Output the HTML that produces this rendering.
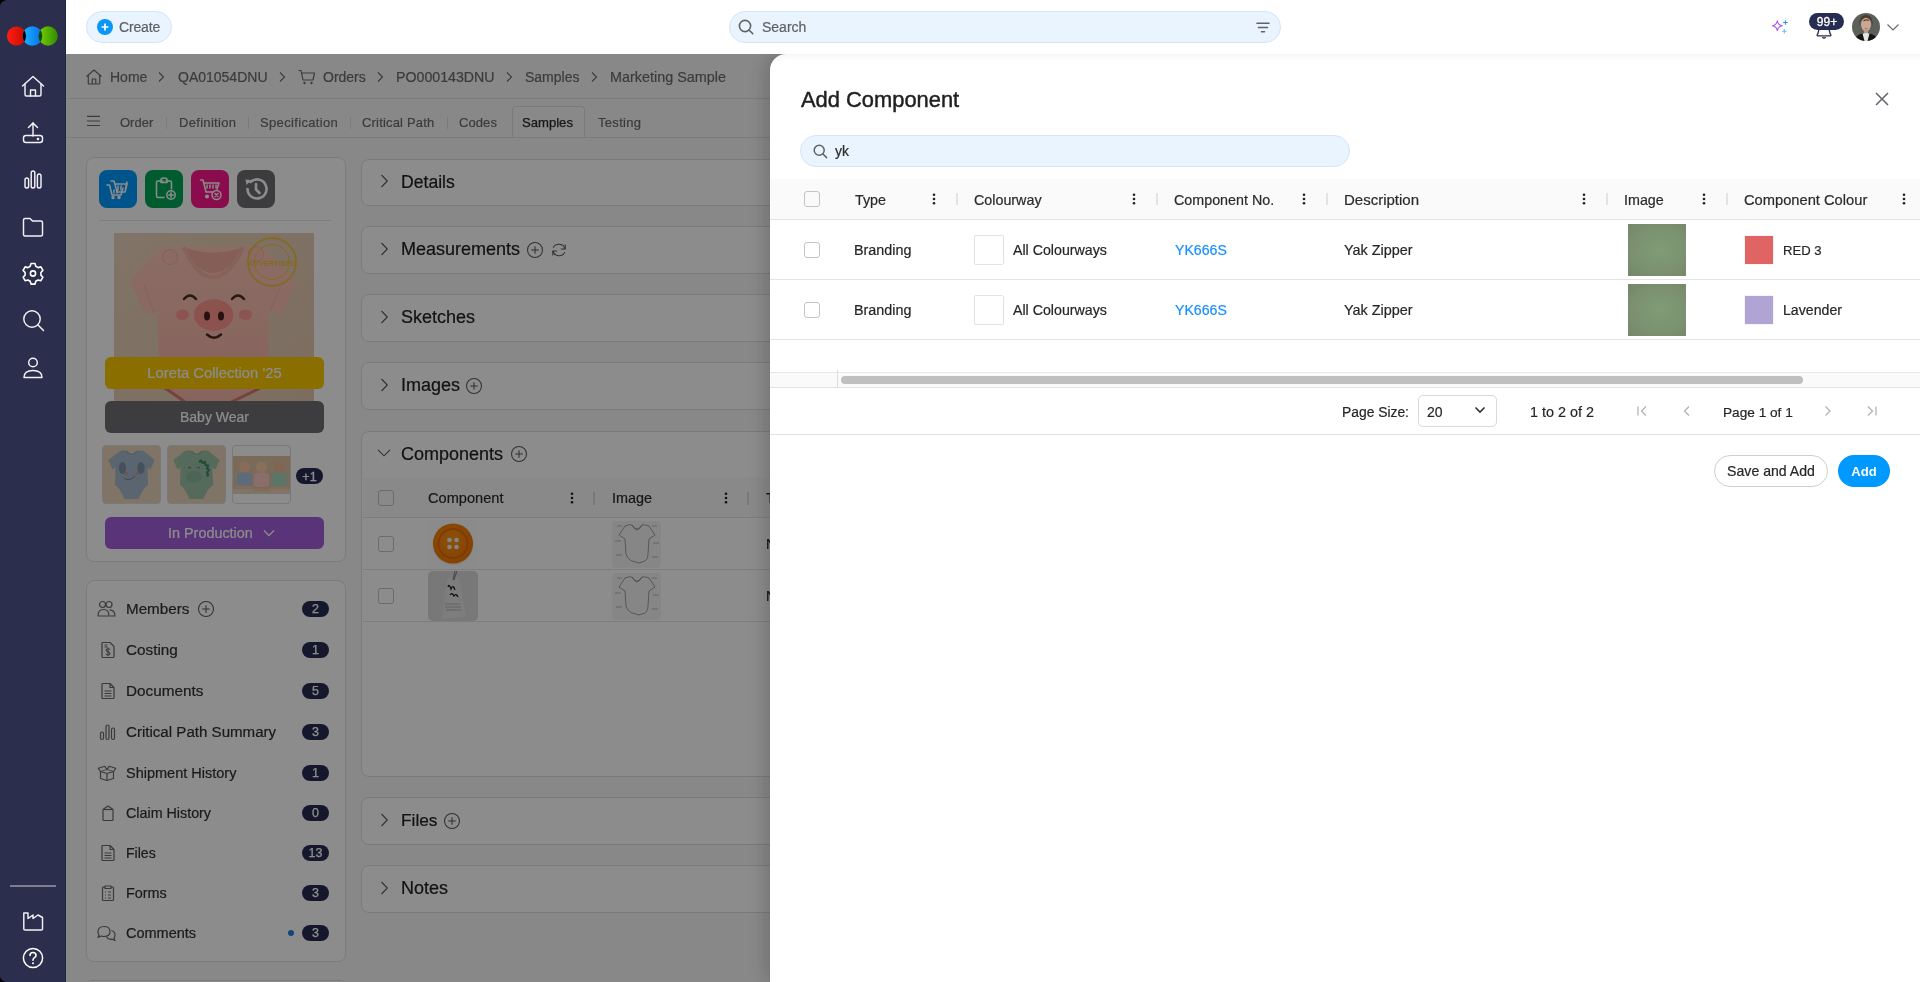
<!DOCTYPE html><html><head><meta charset="utf-8"><style>
html,body{margin:0;padding:0;width:1920px;height:982px;overflow:hidden;background:#fff}
body{position:relative;font-family:"Liberation Sans",sans-serif}
.t{position:absolute;white-space:nowrap;line-height:1;will-change:transform;-webkit-text-stroke:0.2px currentColor}
.r{position:absolute;display:block}
</style></head><body>
<div class="r" style="left:66px;top:54px;width:1854px;height:928px;background:#f8f8f8"></div><svg class="r" style="left:84px;top:68px;" width="20" height="18" viewBox="0 0 20 18"><path d="M2.5 8.5 L10 2 L17.5 8.5 M4.3 7 V15.3 Q4.3 16 5 16 H15 Q15.7 16 15.7 15.3 V7 M8.2 16 V11 H11.8 V16" fill="none" stroke="#6c6c6c" stroke-width="1.2" stroke-linejoin="round"/></svg><div class="t" style="left:110.4px;top:70px;font-size:14px;color:#6c6c6c;font-weight:400;">Home</div><svg class="r" style="left:157px;top:71px;" width="8" height="12" viewBox="0 0 8 12"><path d="M2 1.5 L6.5 6 L2 10.5" fill="none" stroke="#6b6b6b" stroke-width="1.1"/></svg><div class="t" style="left:178px;top:70px;font-size:14px;color:#6c6c6c;font-weight:400;">QA01054DNU</div><svg class="r" style="left:278px;top:71px;" width="8" height="12" viewBox="0 0 8 12"><path d="M2 1.5 L6.5 6 L2 10.5" fill="none" stroke="#6b6b6b" stroke-width="1.1"/></svg><svg class="r" style="left:297px;top:68px;" width="20" height="18" viewBox="0 0 20 18"><path d="M1.5 2.5 H4 L6 12 H16 L17.5 5 H5" fill="none" stroke="#6c6c6c" stroke-width="1.2" stroke-linejoin="round"/><circle cx="7.5" cy="15" r="1.2" fill="#6c6c6c"/><circle cx="14.5" cy="15" r="1.2" fill="#6c6c6c"/></svg><div class="t" style="left:322.6px;top:70px;font-size:14px;color:#6c6c6c;font-weight:400;">Orders</div><svg class="r" style="left:375.5px;top:71px;" width="8" height="12" viewBox="0 0 8 12"><path d="M2 1.5 L6.5 6 L2 10.5" fill="none" stroke="#6b6b6b" stroke-width="1.1"/></svg><div class="t" style="left:396px;top:70px;font-size:14.2px;color:#6c6c6c;font-weight:400;">PO000143DNU</div><svg class="r" style="left:504.5px;top:71px;" width="8" height="12" viewBox="0 0 8 12"><path d="M2 1.5 L6.5 6 L2 10.5" fill="none" stroke="#6b6b6b" stroke-width="1.1"/></svg><div class="t" style="left:525.4px;top:70px;font-size:14px;color:#6c6c6c;font-weight:400;">Samples</div><svg class="r" style="left:590px;top:71px;" width="8" height="12" viewBox="0 0 8 12"><path d="M2 1.5 L6.5 6 L2 10.5" fill="none" stroke="#6b6b6b" stroke-width="1.1"/></svg><div class="t" style="left:610.4px;top:70px;font-size:14.4px;color:#6c6c6c;font-weight:400;">Marketing Sample</div><div class="r" style="left:66px;top:98px;width:1854px;height:1px;background:#e2e2e2"></div><svg class="r" style="left:86px;top:114px;" width="16" height="14" viewBox="0 0 16 14"><path d="M1 2.4 H14 M1 7 H14 M1 11.5 H14" stroke="#6c6c6c" stroke-width="1.1"/></svg><div class="t" style="left:120.4px;top:116px;font-size:13px;color:#6c6c6c;font-weight:400;letter-spacing:0px">Order</div><div class="t" style="left:178.5px;top:116px;font-size:13px;color:#6c6c6c;font-weight:400;letter-spacing:0.31px">Definition</div><div class="t" style="left:259.8px;top:116px;font-size:13px;color:#6c6c6c;font-weight:400;letter-spacing:0.345px">Specification</div><div class="t" style="left:362px;top:116px;font-size:13px;color:#6c6c6c;font-weight:400;letter-spacing:0.18px">Critical Path</div><div class="t" style="left:458.75px;top:116px;font-size:13px;color:#6c6c6c;font-weight:400;letter-spacing:0.08px">Codes</div><div class="r" style="left:166px;top:117px;width:1px;height:12px;background:#dedede"></div><div class="r" style="left:248px;top:117px;width:1px;height:12px;background:#dedede"></div><div class="r" style="left:350px;top:117px;width:1px;height:12px;background:#dedede"></div><div class="r" style="left:446.5px;top:117px;width:1px;height:12px;background:#dedede"></div><div class="r" style="left:511.5px;top:106px;width:73.5px;height:32px;box-sizing:border-box;border:1px solid #e0e0e0;border-bottom:none;border-radius:4px 4px 0 0;background:#f9f9f9"></div><div class="t" style="left:522.3px;top:116px;font-size:13.1px;color:#2a2a2a;font-weight:400;-webkit-text-stroke:0.25px #2a2a2a">Samples</div><div class="t" style="left:598.3px;top:116px;font-size:13px;color:#6c6c6c;font-weight:400;letter-spacing:0.31px">Testing</div><div class="r" style="left:66px;top:137px;width:1854px;height:1px;background:#e2e2e2"></div><div class="r" style="left:86px;top:157px;width:260px;height:405px;box-sizing:border-box;border:1px solid #e0e0e0;border-radius:8px;background:#fff"></div><div class="r" style="left:99px;top:170px;width:38px;height:38px;background:#0099ff;border-radius:8px"></div><div class="r" style="left:145px;top:170px;width:38px;height:38px;background:#00a757;border-radius:8px"></div><div class="r" style="left:191px;top:170px;width:38px;height:38px;background:#fb168a;border-radius:8px"></div><div class="r" style="left:237px;top:170px;width:38px;height:38px;background:#6e6e74;border-radius:8px"></div><svg class="r" style="left:99px;top:170px;" width="38" height="38" viewBox="0 0 38 38"><g fill="none" stroke="#fff" stroke-width="1.5" stroke-linecap="round" stroke-linejoin="round" stroke-width="1.3"><path d="M12 11 H15 L18 22 H26 L28 14 H16"/><path d="M8 15 H10.5 L13 25 H22 L24 18"/><circle cx="14" cy="27.5" r="1" fill="#fff"/><circle cx="20" cy="27.5" r="1" fill="#fff"/><path d="M28 12 L26.5 19"/><path d="M19 16 V20 M22 16 V20 M15 20 V23 M18 20 V23"/></g></svg><svg class="r" style="left:145px;top:170px;" width="38" height="38" viewBox="0 0 38 38"><g fill="none" stroke="#fff" stroke-width="1.5" stroke-linecap="round" stroke-linejoin="round" stroke-width="1.3"><path d="M18 11 H13 Q11.5 11 11.5 12.5 V26 Q11.5 27.5 13 27.5 H19"/><path d="M21 11 H25 Q26.5 11 26.5 12.5 V19"/><path d="M16 12.5 V9.5 Q16 8 19 8 Q22 8 22 9.5 V12.5 Z"/><circle cx="26" cy="25" r="4.2"/><path d="M26 22.8 V27.2 M23.8 25 H28.2"/></g></svg><svg class="r" style="left:191px;top:170px;" width="38" height="38" viewBox="0 0 38 38"><g fill="none" stroke="#fff" stroke-width="1.5" stroke-linecap="round" stroke-linejoin="round" stroke-width="1.3"><path d="M9.5 10 H12 L15 22 H22"/><path d="M13 13 H28 L26 19"/><path d="M16 15 V18 M19 15 V18 M22 15 V18 M25 15 V18"/><circle cx="16" cy="26.5" r="1.3" fill="#fff"/><circle cx="25.5" cy="25" r="4.5"/><path d="M24 23.5 L27 26.5 M27 23.5 L24 26.5"/></g></svg><svg class="r" style="left:237px;top:170px;" width="38" height="38" viewBox="0 0 38 38"><g fill="none" stroke="#fff" stroke-width="2.6" stroke-linecap="round" stroke-linejoin="round"><path d="M10.5 19 A9.5 9.5 0 1 0 13.5 12"/><path d="M19 14 V19.5 L22.5 23"/></g><path d="M8.5 9.5 L14.5 10 L9.5 15 Z" fill="#fff"/></svg><div class="r" style="left:99px;top:220px;width:232px;height:1px;background:#e6e6e6"></div><svg class="r" style="left:114px;top:233px;" width="200" height="168" viewBox="0 0 200 168">
<defs><linearGradient id="pbg" x1="0" y1="0" x2="1" y2="1"><stop offset="0" stop-color="#ead3bd"/><stop offset="1" stop-color="#e2c7ae"/></linearGradient>
<linearGradient id="pbody" x1="0" y1="0" x2="0" y2="1"><stop offset="0" stop-color="#fcc6b9"/><stop offset="1" stop-color="#f6b5a8"/></linearGradient></defs>
<rect width="200" height="168" fill="url(#pbg)"/>
<path d="M46 16 Q56 12 72 14 L127 14 Q142 12 152 18 L176 42 Q183 48 180 56 L168 78 Q163 82 156 78 L154 76 Q156 120 152 150 Q136 160 118 169 L70 169 Q60 160 47 150 Q43 120 44 78 L40 80 Q34 82 30 78 L18 54 Q15 46 22 40 Z" fill="url(#pbody)"/><path d="M48 153 Q60 161 71 169 M150 153 Q135 161 117 169" fill="none" stroke="#d9796e" stroke-width="3"/>
<path d="M72 15 Q99 24 127 15 Q116 40 99 40 Q82 40 72 15Z" fill="#f3ab9f"/>
<path d="M70 14 Q82 44 99 44 Q116 44 129 14" fill="none" stroke="#f4b2a6" stroke-width="4"/>
<path d="M40 80 L30 52 M156 78 L168 50" stroke="#eeaa9e" stroke-width="1" opacity=".6"/>
<circle cx="56" cy="24" r="7.5" fill="#fcc4b7" stroke="#f0ada1" stroke-width="1"/><circle cx="142" cy="21" r="7.5" fill="#fcc4b7" stroke="#f0ada1" stroke-width="1"/>
<path d="M70 66 Q76 59 82 66" fill="none" stroke="#4a2a22" stroke-width="2.4" stroke-linecap="round"/>
<path d="M118 66 Q124 59 130 66" fill="none" stroke="#4a2a22" stroke-width="2.4" stroke-linecap="round"/>
<ellipse cx="99.7" cy="82" rx="19.7" ry="15.7" fill="#fd958e"/>
<ellipse cx="93" cy="83" rx="3" ry="4.5" fill="#4a2020"/><ellipse cx="107" cy="83" rx="3" ry="4.5" fill="#4a2020"/>
<ellipse cx="68.4" cy="81.8" rx="6.6" ry="5.3" fill="#fd9a98"/><ellipse cx="131.4" cy="81.8" rx="6.6" ry="5.3" fill="#fd9a98"/>
<path d="M93 101.5 Q100 108 107 101.5" fill="none" stroke="#4a2a22" stroke-width="2.4" stroke-linecap="round"/>
<g opacity=".85" fill="none" stroke="#f0c030"><circle cx="158" cy="29" r="24" stroke-width="1.8"/><circle cx="158" cy="29" r="17.5" stroke-width="1"/></g>
<text x="158" y="32.5" font-family="Liberation Sans" font-size="7.5" font-weight="700" text-anchor="middle" fill="#f0c030" opacity=".85">ADVERTISED</text>
</svg><div class="r" style="left:105px;top:357px;width:219px;height:32px;background:#fbc800;border-radius:6px"></div><div class="t" style="left:104.5px;width:219px;text-align:center;top:366px;font-size:14.8px;color:#fff;font-weight:400;">Loreta Collection '25</div><div class="r" style="left:105px;top:401px;width:219px;height:32px;background:#707075;border-radius:6px"></div><div class="t" style="left:105.0px;width:219px;text-align:center;top:410px;font-size:14px;color:#fff;font-weight:400;">Baby Wear</div><div class="r" style="left:101.5px;top:445px;width:59px;height:59px;box-sizing:border-box;border:1px solid #dcdcdc;border-radius:4px;background:#e7d3b8"></div><svg class="r" style="left:102.5px;top:446px;" width="57" height="57" viewBox="0 0 57 57"><path d="M17 5 Q21 3.5 23.5 5 Q27 9.5 28.5 9.5 Q30 9.5 34 5 Q36.5 3.5 40.5 5 L51.5 14 L47.5 23.5 L44.5 21.5 L45 39 Q40 42 35.5 53 L21.5 53 Q17 42 12 39 L12.5 21.5 L9.5 23.5 L5.5 14 Z" fill="#a4b9cc"/><path d="M23.5 5 Q28.5 12 34 5" fill="none" stroke="#94abc0" stroke-width="1.5"/><ellipse cx="19.5" cy="22" rx="3.6" ry="6" fill="#7d93a8"/><ellipse cx="38" cy="22" rx="3.6" ry="6" fill="#7d93a8"/><circle cx="23.5" cy="27.5" r="1.4" fill="#f28878"/><circle cx="34.5" cy="27.5" r="1.4" fill="#f28878"/><path d="M21 32 Q26 36 32 30" fill="none" stroke="#6c8094" stroke-width="1"/></svg><div class="r" style="left:166.5px;top:445px;width:59px;height:59px;box-sizing:border-box;border:1px solid #dcdcdc;border-radius:4px;background:#e7d3b8"></div><svg class="r" style="left:167.5px;top:446px;" width="57" height="57" viewBox="0 0 57 57"><path d="M17 5 Q21 3.5 23.5 5 Q27 9.5 28.5 9.5 Q30 9.5 34 5 Q36.5 3.5 40.5 5 L51.5 14 L47.5 23.5 L44.5 21.5 L45 39 Q40 42 35.5 53 L21.5 53 Q17 42 12 39 L12.5 21.5 L9.5 23.5 L5.5 14 Z" fill="#9cc1a7"/><path d="M23.5 5 Q28.5 12 34 5" fill="none" stroke="#8cb498" stroke-width="1.5"/><ellipse cx="26" cy="31" rx="8" ry="6" fill="#8fb89c"/><path d="M31 16 L33 14.5 L34.5 17 L37 16 L37.5 19 L40 19.5 L39 22.5 L41 24 L39 26.5 L40 29 L38.5 30" fill="none" stroke="#3f8a6a" stroke-width="2.2"/><path d="M20 22 Q21.5 20.5 23 22 M29 22 Q30.5 20.5 32 22" fill="none" stroke="#3f7a60" stroke-width="1"/></svg><div class="r" style="left:231.5px;top:445px;width:59px;height:59px;box-sizing:border-box;border:1px solid #dcdcdc;border-radius:4px;background:#fff"></div><svg class="r" style="left:232.5px;top:456px;" width="57" height="38" viewBox="0 0 57 38"><rect width="57" height="38" fill="#dcc2a2"/><rect y="33" width="57" height="5" fill="#e6d3bd"/><circle cx="11.5" cy="11" r="5.5" fill="#f6c6a2"/><circle cx="28.5" cy="11" r="5.5" fill="#f8caa8"/><circle cx="46" cy="11" r="5.5" fill="#eab894"/><path d="M4 18 Q11.5 15 19 18 L19 30 Q11.5 32 4 30 Z" fill="#a9c4de"/><path d="M21 18 Q28.5 15 36 18 L36 30 Q28.5 32 21 30 Z" fill="#fdc9c4"/><path d="M38.5 18 Q46 15 53.5 18 L53.5 30 Q46 32 38.5 30 Z" fill="#a6d6bc"/><path d="M3 31 H20 M20 34 H37 M38 32 H55" stroke="#f2c4a2" stroke-width="3"/></svg><div class="r" style="left:296px;top:468px;width:27px;height:16px;background:#272d52;border-radius:8px"></div><div class="t" style="left:296.0px;width:27px;text-align:center;top:471px;font-size:12.5px;color:#fff;font-weight:400;-webkit-text-stroke:0.3px #fff">+1</div><div class="r" style="left:105px;top:517px;width:219px;height:32px;background:#a45fdc;border-radius:6px"></div><div class="t" style="left:167.5px;top:526px;font-size:14.4px;color:#fff;font-weight:400;">In Production</div><svg class="r" style="left:262px;top:528px;" width="14" height="10" viewBox="0 0 14 10"><path d="M2 2.5 L7 7.5 L12 2.5" fill="none" stroke="#fff" stroke-width="1.3"/></svg><div class="r" style="left:86px;top:580px;width:260px;height:382px;box-sizing:border-box;border:1px solid #e0e0e0;border-radius:8px;background:#fff"></div><div class="t" style="left:125.5px;top:601px;font-size:15.2px;color:#313131;font-weight:400;">Members</div><div class="r" style="left:302px;top:601px;width:27px;height:16px;background:#272d52;border-radius:8px"></div><div class="t" style="left:302.0px;width:27px;text-align:center;top:603px;font-size:12.5px;color:#fff;font-weight:400;-webkit-text-stroke:0.25px #fff">2</div><div class="t" style="left:125.5px;top:642px;font-size:15.3px;color:#313131;font-weight:400;">Costing</div><div class="r" style="left:302px;top:642px;width:27px;height:16px;background:#272d52;border-radius:8px"></div><div class="t" style="left:302.0px;width:27px;text-align:center;top:644px;font-size:12.5px;color:#fff;font-weight:400;-webkit-text-stroke:0.25px #fff">1</div><div class="t" style="left:125.5px;top:683px;font-size:15.3px;color:#313131;font-weight:400;">Documents</div><div class="r" style="left:302px;top:683px;width:27px;height:16px;background:#272d52;border-radius:8px"></div><div class="t" style="left:302.0px;width:27px;text-align:center;top:685px;font-size:12.5px;color:#fff;font-weight:400;-webkit-text-stroke:0.25px #fff">5</div><div class="t" style="left:125.5px;top:724px;font-size:15.1px;color:#313131;font-weight:400;">Critical Path Summary</div><div class="r" style="left:302px;top:724px;width:27px;height:16px;background:#272d52;border-radius:8px"></div><div class="t" style="left:302.0px;width:27px;text-align:center;top:726px;font-size:12.5px;color:#fff;font-weight:400;-webkit-text-stroke:0.25px #fff">3</div><div class="t" style="left:125.5px;top:766px;font-size:14.5px;color:#313131;font-weight:400;">Shipment History</div><div class="r" style="left:302px;top:765px;width:27px;height:16px;background:#272d52;border-radius:8px"></div><div class="t" style="left:302.0px;width:27px;text-align:center;top:767px;font-size:12.5px;color:#fff;font-weight:400;-webkit-text-stroke:0.25px #fff">1</div><div class="t" style="left:125.5px;top:806px;font-size:14.3px;color:#313131;font-weight:400;">Claim History</div><div class="r" style="left:302px;top:805px;width:27px;height:16px;background:#272d52;border-radius:8px"></div><div class="t" style="left:302.0px;width:27px;text-align:center;top:807px;font-size:12.5px;color:#fff;font-weight:400;-webkit-text-stroke:0.25px #fff">0</div><div class="t" style="left:125.5px;top:846px;font-size:14.1px;color:#313131;font-weight:400;">Files</div><div class="r" style="left:302px;top:845px;width:27px;height:16px;background:#272d52;border-radius:8px"></div><div class="t" style="left:302.0px;width:27px;text-align:center;top:847px;font-size:12.5px;color:#fff;font-weight:400;-webkit-text-stroke:0.25px #fff">13</div><div class="t" style="left:125.5px;top:886px;font-size:14.4px;color:#313131;font-weight:400;">Forms</div><div class="r" style="left:302px;top:885px;width:27px;height:16px;background:#272d52;border-radius:8px"></div><div class="t" style="left:302.0px;width:27px;text-align:center;top:887px;font-size:12.5px;color:#fff;font-weight:400;-webkit-text-stroke:0.25px #fff">3</div><div class="t" style="left:125.5px;top:926px;font-size:14.5px;color:#313131;font-weight:400;">Comments</div><div class="r" style="left:302px;top:925px;width:27px;height:16px;background:#272d52;border-radius:8px"></div><div class="t" style="left:302.0px;width:27px;text-align:center;top:927px;font-size:12.5px;color:#fff;font-weight:400;-webkit-text-stroke:0.25px #fff">3</div><svg class="r" style="left:97px;top:600px;" width="20" height="18" viewBox="0 0 20 18"><g fill="none" stroke="#6a6a6a" stroke-width="1.2" stroke-linejoin="round"><circle cx="5.5" cy="4.5" r="3"/><circle cx="12" cy="4.5" r="3"/><path d="M1 16 Q1 9.5 6.5 9.5 Q12 9.5 12 16 Z"/><path d="M12.5 9.8 Q18 10 18 16 H13"/></g></svg><svg class="r" style="left:100px;top:641px;" width="16" height="18" viewBox="0 0 16 18"><g fill="none" stroke="#6a6a6a" stroke-width="1.2" stroke-linejoin="round"><path d="M3 1.5 H10 L14 5.5 V15.5 Q14 16.5 13 16.5 H3 Q2 16.5 2 15.5 V2.5 Q2 1.5 3 1.5Z"/><path d="M4.5 4 H7.5 M4.5 6 H7.5"/><path d="M10 8.8 Q10 7.7 8 7.7 Q6 7.7 6 9.1 Q6 10.5 8 10.8 Q10 11.1 10 12.6 Q10 14 8 14 Q6 14 6 12.8 M8 6.6 V15.2" stroke-width="1.05"/></g></svg><svg class="r" style="left:100px;top:682px;" width="16" height="18" viewBox="0 0 16 18"><g fill="none" stroke="#6a6a6a" stroke-width="1.2" stroke-linejoin="round"><path d="M3 1.5 H10 L14 5.5 V15.5 Q14 16.5 13 16.5 H3 Q2 16.5 2 15.5 V2.5 Q2 1.5 3 1.5Z"/><path d="M10 1.5 V5.5 H14"/><path d="M4.5 9 H11.5 M4.5 11.5 H11.5 M4.5 14 H11.5"/></g></svg><svg class="r" style="left:99px;top:723px;" width="17" height="18" viewBox="0 0 17 18"><g fill="none" stroke="#6a6a6a" stroke-width="1.2" stroke-linejoin="round"><rect x="1.5" y="9" width="3" height="7.5" rx="1.5"/><rect x="7" y="2" width="3" height="14.5" rx="1.5"/><rect x="12.5" y="5" width="3" height="11.5" rx="1.5"/></g></svg><svg class="r" style="left:97px;top:764px;" width="20" height="18" viewBox="0 0 20 18"><g fill="none" stroke="#6a6a6a" stroke-width="1.2" stroke-linejoin="round"><path d="M3.5 7.5 V14.5 L10 16.5 L16.5 14.5 V7.5"/><path d="M3.5 7.5 L10 9.5 L16.5 7.5 M10 9.5 V16.5"/><path d="M3.5 7.5 L1.3 4.3 L7.8 2.3 L10 5.5 L12.2 2.3 L18.7 4.3 L16.5 7.5"/><path d="M10 5.5 L3.5 7.5 M10 5.5 L16.5 7.5" stroke-width="0.8"/></g></svg><svg class="r" style="left:100px;top:804px;" width="16" height="18" viewBox="0 0 16 18"><g fill="none" stroke="#6a6a6a" stroke-width="1.2" stroke-linejoin="round"><path d="M3 5.5 L8 2 L13 5.5 V15.5 Q13 16.5 12 16.5 H4 Q3 16.5 3 15.5 Z"/><path d="M3 5.5 H13"/></g></svg><svg class="r" style="left:100px;top:844px;" width="16" height="18" viewBox="0 0 16 18"><g fill="none" stroke="#6a6a6a" stroke-width="1.2" stroke-linejoin="round"><path d="M3 1.5 H10 L14 5.5 V15.5 Q14 16.5 13 16.5 H3 Q2 16.5 2 15.5 V2.5 Q2 1.5 3 1.5Z"/><path d="M10 1.5 V5.5 H14"/><path d="M4.5 9 H11.5 M4.5 11.5 H11.5 M4.5 14 H11.5"/></g></svg><svg class="r" style="left:100px;top:884px;" width="16" height="18" viewBox="0 0 16 18"><g fill="none" stroke="#6a6a6a" stroke-width="1.2" stroke-linejoin="round"><path d="M5 3 H3.5 Q2.5 3 2.5 4 V15.5 Q2.5 16.5 3.5 16.5 H12.5 Q13.5 16.5 13.5 15.5 V4 Q13.5 3 12.5 3 H11"/><path d="M5 4.5 V2 H11 V4.5 Z"/><path d="M5 8 H6 M8 8 H11 M5 11 H6 M8 11 H11 M5 14 H6 M8 14 H11"/></g></svg><svg class="r" style="left:96px;top:924px;" width="21" height="18" viewBox="0 0 21 18"><g fill="none" stroke="#6a6a6a" stroke-width="1.2" stroke-linejoin="round"><path d="M2 8 Q2 2.5 8 2.5 Q14 2.5 14 7.5 Q14 12.5 8 12.5 Q6.5 12.5 5 12 L2 13.5 L3 11 Q2 9.8 2 8Z"/><path d="M15.5 6.5 Q19 7.5 19 11 Q19 12.8 18 14 L19 16.5 L16 15.2 Q12.5 16 10.5 13"/></g></svg><svg class="r" style="left:197.0px;top:600.0px;" width="18" height="18" viewBox="0 0 18 18"><circle cx="9.0" cy="9.0" r="7.5" fill="none" stroke="#5a5a5a" stroke-width="1.05"/><path d="M9.0 5.2 V12.8 M5.2 9.0 H12.8" stroke="#5a5a5a" stroke-width="1.05"/></svg><div class="r" style="left:287.8px;top:930px;width:6px;height:6px;background:#1f7fe0;border-radius:50%"></div><div class="r" style="left:86px;top:980px;width:260px;height:10px;box-sizing:border-box;border:1px solid #e0e0e0;border-radius:8px;background:#fff"></div><div class="r" style="left:361px;top:158.5px;width:1200px;height:47px;box-sizing:border-box;border:1px solid #e0e0e0;border-radius:8px;background:#fff"></div><svg class="r" style="left:380px;top:174.0px;" width="10" height="14" viewBox="0 0 10 14"><path d="M1.5 1 L7.3 7 L1.5 13" fill="none" stroke="#5a5a5a" stroke-width="1.1"/></svg><div class="t" style="left:401px;top:173.8px;font-size:17.6px;color:#222;font-weight:400;">Details</div><div class="r" style="left:361px;top:226px;width:1200px;height:47.5px;box-sizing:border-box;border:1px solid #e0e0e0;border-radius:8px;background:#fff"></div><svg class="r" style="left:380px;top:241.5px;" width="10" height="14" viewBox="0 0 10 14"><path d="M1.5 1 L7.3 7 L1.5 13" fill="none" stroke="#5a5a5a" stroke-width="1.1"/></svg><div class="t" style="left:401px;top:240.3px;font-size:18px;color:#222;font-weight:400;">Measurements</div><div class="r" style="left:361px;top:294px;width:1200px;height:47.5px;box-sizing:border-box;border:1px solid #e0e0e0;border-radius:8px;background:#fff"></div><svg class="r" style="left:380px;top:309.5px;" width="10" height="14" viewBox="0 0 10 14"><path d="M1.5 1 L7.3 7 L1.5 13" fill="none" stroke="#5a5a5a" stroke-width="1.1"/></svg><div class="t" style="left:401px;top:308.3px;font-size:18px;color:#222;font-weight:400;">Sketches</div><div class="r" style="left:361px;top:362px;width:1200px;height:47.5px;box-sizing:border-box;border:1px solid #e0e0e0;border-radius:8px;background:#fff"></div><svg class="r" style="left:380px;top:377.5px;" width="10" height="14" viewBox="0 0 10 14"><path d="M1.5 1 L7.3 7 L1.5 13" fill="none" stroke="#5a5a5a" stroke-width="1.1"/></svg><div class="t" style="left:401px;top:376.3px;font-size:18px;color:#222;font-weight:400;">Images</div><div class="r" style="left:361px;top:430.5px;width:1200px;height:346px;box-sizing:border-box;border:1px solid #e0e0e0;border-radius:8px;background:#fff"></div><div class="t" style="left:401px;top:444.8px;font-size:18px;color:#222;font-weight:400;">Components</div><div class="r" style="left:361px;top:797px;width:1200px;height:47.5px;box-sizing:border-box;border:1px solid #e0e0e0;border-radius:8px;background:#fff"></div><svg class="r" style="left:380px;top:812.5px;" width="10" height="14" viewBox="0 0 10 14"><path d="M1.5 1 L7.3 7 L1.5 13" fill="none" stroke="#5a5a5a" stroke-width="1.1"/></svg><div class="t" style="left:401px;top:812.3px;font-size:17.3px;color:#222;font-weight:400;">Files</div><div class="r" style="left:361px;top:865px;width:1200px;height:47.5px;box-sizing:border-box;border:1px solid #e0e0e0;border-radius:8px;background:#fff"></div><svg class="r" style="left:380px;top:880.5px;" width="10" height="14" viewBox="0 0 10 14"><path d="M1.5 1 L7.3 7 L1.5 13" fill="none" stroke="#5a5a5a" stroke-width="1.1"/></svg><div class="t" style="left:401px;top:879.3px;font-size:18px;color:#222;font-weight:400;">Notes</div><svg class="r" style="left:377px;top:448px;" width="14" height="11" viewBox="0 0 14 11"><path d="M1 1.8 L7 7.8 L13 1.8" fill="none" stroke="#5a5a5a" stroke-width="1.1"/></svg><svg class="r" style="left:526.0px;top:241.0px;" width="18" height="18" viewBox="0 0 18 18"><circle cx="9.0" cy="9.0" r="7.5" fill="none" stroke="#5a5a5a" stroke-width="1.05"/><path d="M9.0 5.2 V12.8 M5.2 9.0 H12.8" stroke="#5a5a5a" stroke-width="1.05"/></svg><svg class="r" style="left:551px;top:242px;" width="16" height="16" viewBox="0 0 16 16"><g fill="none" stroke="#5a5a5a" stroke-width="1.05"><path d="M14 7 A6.3 6.3 0 0 0 2.2 5.8"/><path d="M2 9 A6.3 6.3 0 0 0 13.8 10.2"/><path d="M14.2 2.5 V7 H9.8"/><path d="M1.8 13.5 V9 H6.2"/></g></svg><svg class="r" style="left:465.0px;top:377.0px;" width="18" height="18" viewBox="0 0 18 18"><circle cx="9.0" cy="9.0" r="7.5" fill="none" stroke="#5a5a5a" stroke-width="1.05"/><path d="M9.0 5.2 V12.8 M5.2 9.0 H12.8" stroke="#5a5a5a" stroke-width="1.05"/></svg><svg class="r" style="left:510.0px;top:444.5px;" width="18" height="18" viewBox="0 0 18 18"><circle cx="9.0" cy="9.0" r="7.5" fill="none" stroke="#5a5a5a" stroke-width="1.05"/><path d="M9.0 5.2 V12.8 M5.2 9.0 H12.8" stroke="#5a5a5a" stroke-width="1.05"/></svg><svg class="r" style="left:443.0px;top:812.0px;" width="18" height="18" viewBox="0 0 18 18"><circle cx="9.0" cy="9.0" r="7.5" fill="none" stroke="#5a5a5a" stroke-width="1.05"/><path d="M9.0 5.2 V12.8 M5.2 9.0 H12.8" stroke="#5a5a5a" stroke-width="1.05"/></svg><div class="r" style="left:362.5px;top:478px;width:900px;height:39px;background:#fafafa"></div><div class="r" style="left:362.5px;top:517px;width:900px;height:1px;background:#e4e4e4"></div><div class="r" style="left:378px;top:489.5px;width:16px;height:16px;box-sizing:border-box;border:1px solid #c4c4c4;border-radius:3px"></div><div class="t" style="left:428.4px;top:491.3px;font-size:14.6px;color:#2a2a2a;font-weight:400;-webkit-text-stroke:0.2px #2a2a2a">Component</div><svg class="r" style="left:569.7px;top:492.3px;" width="4" height="12" viewBox="0 0 4 12"><circle cx="2" cy="1.8" r="1.3" fill="#222"/><circle cx="2" cy="6" r="1.3" fill="#222"/><circle cx="2" cy="10.2" r="1.3" fill="#222"/></svg><div class="r" style="left:593.3px;top:492px;width:1.6px;height:13px;background:#dcdcdc"></div><div class="t" style="left:612px;top:491.3px;font-size:14.4px;color:#2a2a2a;font-weight:400;-webkit-text-stroke:0.2px #2a2a2a">Image</div><svg class="r" style="left:723.6px;top:492.3px;" width="4" height="12" viewBox="0 0 4 12"><circle cx="2" cy="1.8" r="1.3" fill="#222"/><circle cx="2" cy="6" r="1.3" fill="#222"/><circle cx="2" cy="10.2" r="1.3" fill="#222"/></svg><div class="r" style="left:747.3px;top:492px;width:1.6px;height:13px;background:#dcdcdc"></div><div class="t" style="left:765.5px;top:491.3px;font-size:14.4px;color:#2a2a2a;font-weight:400;-webkit-text-stroke:0.2px #2a2a2a">Type</div><div class="r" style="left:362.5px;top:569px;width:900px;height:1px;background:#e4e4e4"></div><div class="r" style="left:362.5px;top:621px;width:900px;height:1px;background:#e4e4e4"></div><div class="r" style="left:378px;top:536px;width:16px;height:16px;box-sizing:border-box;border:1px solid #c4c4c4;border-radius:3px"></div><div class="r" style="left:378px;top:588px;width:16px;height:16px;box-sizing:border-box;border:1px solid #c4c4c4;border-radius:3px"></div><div class="r" style="left:428px;top:520px;width:50px;height:48px;background:#fdfdfd"></div><svg class="r" style="left:430px;top:521px;" width="46" height="46" viewBox="0 0 46 46"><defs><radialGradient id="btn" cx=".45" cy=".4" r=".65"><stop offset="0" stop-color="#ff9412"/><stop offset="1" stop-color="#f27400"/></radialGradient></defs><circle cx="23" cy="23.5" r="20.5" fill="#d9d9d9" opacity=".5"/><circle cx="23" cy="22.5" r="20" fill="url(#btn)"/><circle cx="23" cy="22.5" r="14.5" fill="none" stroke="#e06a00" stroke-width="1.6"/><circle cx="19.5" cy="19" r="2.3" fill="#eef2f6"/><circle cx="26.5" cy="19" r="2.3" fill="#eef2f6"/><circle cx="19.5" cy="26" r="2.3" fill="#eef2f6"/><circle cx="26.5" cy="26" r="2.3" fill="#eef2f6"/></svg><div class="r" style="left:428px;top:570.5px;width:50px;height:50.5px;background:#dadada;border-radius:5px"></div><svg class="r" style="left:428px;top:570.5px;" width="50" height="51" viewBox="0 0 50 51"><path d="M19 8 Q25 4 31 7 L38 46 L14 48 Z" fill="#e4e4e4"/><path d="M25 9 L27 0 M26 9 L29 0" stroke="#666" fill="none" stroke-width="0.8"/><path d="M20 16 Q21 12 23 18 Q25 13 27 19 M22 24 Q24 21 26 25 Q28 22 30 26" stroke="#222" fill="none" stroke-width="1.3"/><path d="M17 33 H32 M17 36 H33 M18 39 H33" stroke="#aaa" stroke-width="0.9"/></svg><div class="r" style="left:612px;top:521px;width:49px;height:47px;background:#f4f4f4;border-radius:4px"></div><svg class="r" style="left:612px;top:521px;" width="49" height="47" viewBox="0 0 49 47"><path d="M13 5 Q18 3 20 4 Q23 9 25 9 Q27 9 30 4 Q32 3 37 5 L43 14 L37 18 L36 33 Q36 40 30 41 Q26 43 24 41 Q16 40 14 33 L13 18 L7 14 Z" fill="none" stroke="#888" stroke-width="0.8"/><path d="M20 4 Q25 12 30 4" fill="none" stroke="#888" stroke-width="0.8"/><path d="M5 5 H10 M40 5 H45 M3 20 H9 M41 22 H47 M4 34 H10 M40 36 H46" stroke="#aaa" stroke-width="0.8"/></svg><div class="r" style="left:612px;top:573px;width:49px;height:47px;background:#f4f4f4;border-radius:4px"></div><svg class="r" style="left:612px;top:573px;" width="49" height="47" viewBox="0 0 49 47"><path d="M13 5 Q18 3 20 4 Q23 9 25 9 Q27 9 30 4 Q32 3 37 5 L43 14 L37 18 L36 33 Q36 40 30 41 Q26 43 24 41 Q16 40 14 33 L13 18 L7 14 Z" fill="none" stroke="#888" stroke-width="0.8"/><path d="M20 4 Q25 12 30 4" fill="none" stroke="#888" stroke-width="0.8"/><path d="M5 5 H10 M40 5 H45 M3 20 H9 M41 22 H47 M4 34 H10 M40 36 H46" stroke="#aaa" stroke-width="0.8"/></svg><div class="t" style="left:766px;top:537px;font-size:14px;color:#222;font-weight:400;">N</div><div class="t" style="left:766px;top:589px;font-size:14px;color:#222;font-weight:400;">N</div><div class="r" style="left:66px;top:54px;width:1854px;height:928px;background:rgba(0,0,0,.45)"></div><div class="r" style="left:770px;top:54px;width:1150px;height:928px;background:#fff;border-top-left-radius:16px;box-shadow:-4px 0 20px rgba(0,0,0,.2), inset 0 8px 8px -8px rgba(0,0,0,.07)"></div><div class="t" style="left:800.5px;top:89.2px;font-size:21.9px;color:#1f1f1f;font-weight:400;-webkit-text-stroke:0.45px #1f1f1f">Add Component</div><svg class="r" style="left:1874px;top:91px;" width="16" height="16" viewBox="0 0 16 16"><path d="M2 2 L14 14 M14 2 L2 14" stroke="#5f6368" stroke-width="1.5"/></svg><div class="r" style="left:800px;top:135px;width:550px;height:32px;box-sizing:border-box;border:1px solid #d2e6fb;background:#eaf4fe;border-radius:16px"></div><svg class="r" style="left:811px;top:142px;" width="20" height="20" viewBox="0 0 20 20"><circle cx="8.2" cy="8.2" r="5" fill="none" stroke="#5f6368" stroke-width="1.5"/><path d="M11.8 11.8 L15.6 15.6" stroke="#5f6368" stroke-width="1.5" stroke-linecap="round"/></svg><div class="t" style="left:835.3px;top:144px;font-size:14px;color:#2b2b2b;font-weight:400;">yk</div><div class="r" style="left:770px;top:179px;width:1150px;height:40px;background:#fafafa"></div><div class="r" style="left:770px;top:219px;width:1150px;height:1px;background:#e2e2e2"></div><div class="r" style="left:804px;top:191px;width:16px;height:16px;box-sizing:border-box;border:1px solid #c4c4c4;border-radius:3px"></div><div class="t" style="left:855px;top:193px;font-size:14.3px;color:#2a2a2a;font-weight:400;-webkit-text-stroke:0.2px #2a2a2a">Type</div><div class="t" style="left:974px;top:193px;font-size:14.3px;color:#2a2a2a;font-weight:400;-webkit-text-stroke:0.2px #2a2a2a">Colourway</div><div class="t" style="left:1174px;top:193px;font-size:14.3px;color:#2a2a2a;font-weight:400;-webkit-text-stroke:0.2px #2a2a2a">Component No.</div><div class="t" style="left:1344.4px;top:192px;font-size:15px;color:#2a2a2a;font-weight:400;-webkit-text-stroke:0.2px #2a2a2a">Description</div><div class="t" style="left:1624.4px;top:193px;font-size:14.3px;color:#2a2a2a;font-weight:400;-webkit-text-stroke:0.2px #2a2a2a">Image</div><div class="t" style="left:1744.3px;top:193px;font-size:14.7px;color:#2a2a2a;font-weight:400;-webkit-text-stroke:0.2px #2a2a2a">Component Colour</div><svg class="r" style="left:931.5px;top:192.6px;" width="4" height="12" viewBox="0 0 4 12"><circle cx="2" cy="1.8" r="1.3" fill="#222"/><circle cx="2" cy="6" r="1.3" fill="#222"/><circle cx="2" cy="10.2" r="1.3" fill="#222"/></svg><svg class="r" style="left:1131.5px;top:192.6px;" width="4" height="12" viewBox="0 0 4 12"><circle cx="2" cy="1.8" r="1.3" fill="#222"/><circle cx="2" cy="6" r="1.3" fill="#222"/><circle cx="2" cy="10.2" r="1.3" fill="#222"/></svg><svg class="r" style="left:1301.5px;top:192.6px;" width="4" height="12" viewBox="0 0 4 12"><circle cx="2" cy="1.8" r="1.3" fill="#222"/><circle cx="2" cy="6" r="1.3" fill="#222"/><circle cx="2" cy="10.2" r="1.3" fill="#222"/></svg><svg class="r" style="left:1581.8px;top:192.6px;" width="4" height="12" viewBox="0 0 4 12"><circle cx="2" cy="1.8" r="1.3" fill="#222"/><circle cx="2" cy="6" r="1.3" fill="#222"/><circle cx="2" cy="10.2" r="1.3" fill="#222"/></svg><svg class="r" style="left:1702px;top:192.6px;" width="4" height="12" viewBox="0 0 4 12"><circle cx="2" cy="1.8" r="1.3" fill="#222"/><circle cx="2" cy="6" r="1.3" fill="#222"/><circle cx="2" cy="10.2" r="1.3" fill="#222"/></svg><svg class="r" style="left:1901.5px;top:192.6px;" width="4" height="12" viewBox="0 0 4 12"><circle cx="2" cy="1.8" r="1.3" fill="#222"/><circle cx="2" cy="6" r="1.3" fill="#222"/><circle cx="2" cy="10.2" r="1.3" fill="#222"/></svg><div class="r" style="left:955.5px;top:193px;width:2px;height:12px;background:#e3e3e3"></div><div class="r" style="left:1155.5px;top:193px;width:2px;height:12px;background:#e3e3e3"></div><div class="r" style="left:1325.5px;top:193px;width:2px;height:12px;background:#e3e3e3"></div><div class="r" style="left:1605.5px;top:193px;width:2px;height:12px;background:#e3e3e3"></div><div class="r" style="left:1725.5px;top:193px;width:2px;height:12px;background:#e3e3e3"></div><div class="r" style="left:804px;top:242px;width:16px;height:16px;box-sizing:border-box;border:1px solid #c4c4c4;border-radius:3px"></div><div class="t" style="left:854.2px;top:243px;font-size:14.35px;color:#262626;font-weight:400;">Branding</div><div class="r" style="left:974px;top:235px;width:30px;height:30px;box-sizing:border-box;border:1px solid #e2e2e2;border-radius:2px;background:#fff"></div><div class="t" style="left:1013.3px;top:243px;font-size:14.2px;color:#262626;font-weight:400;">All Colourways</div><div class="t" style="left:1174.5px;top:243px;font-size:14.15px;color:#1890ff;font-weight:400;">YK666S</div><div class="t" style="left:1344.4px;top:243px;font-size:14.4px;color:#262626;font-weight:400;">Yak Zipper</div><div class="r" style="left:1628px;top:224px;width:58px;height:52px;background:radial-gradient(ellipse at 55% 50%,#7f9c74 0%,#7b9170 60%,#75876a 100%)"></div><div class="r" style="left:1745px;top:236px;width:28px;height:28px;background:#e06464;box-shadow:0 0 1px rgba(0,0,0,.25)"></div><div class="t" style="left:1783.3px;top:244px;font-size:13.1px;color:#262626;font-weight:400;">RED 3</div><div class="r" style="left:770px;top:279px;width:1150px;height:1px;background:#e4e4e4"></div><div class="r" style="left:804px;top:302px;width:16px;height:16px;box-sizing:border-box;border:1px solid #c4c4c4;border-radius:3px"></div><div class="t" style="left:854.2px;top:303px;font-size:14.35px;color:#262626;font-weight:400;">Branding</div><div class="r" style="left:974px;top:295px;width:30px;height:30px;box-sizing:border-box;border:1px solid #e2e2e2;border-radius:2px;background:#fff"></div><div class="t" style="left:1013.3px;top:303px;font-size:14.2px;color:#262626;font-weight:400;">All Colourways</div><div class="t" style="left:1174.5px;top:303px;font-size:14.15px;color:#1890ff;font-weight:400;">YK666S</div><div class="t" style="left:1344.4px;top:303px;font-size:14.4px;color:#262626;font-weight:400;">Yak Zipper</div><div class="r" style="left:1628px;top:284px;width:58px;height:52px;background:radial-gradient(ellipse at 55% 50%,#7f9c74 0%,#7b9170 60%,#75876a 100%)"></div><div class="r" style="left:1745px;top:296px;width:28px;height:28px;background:#b0a4d4;box-shadow:0 0 1px rgba(0,0,0,.25)"></div><div class="t" style="left:1783.3px;top:303px;font-size:14.15px;color:#262626;font-weight:400;">Lavender</div><div class="r" style="left:770px;top:339px;width:1150px;height:1px;background:#e4e4e4"></div><div class="r" style="left:770px;top:372px;width:1150px;height:16px;background:#fafafa;border-top:1px solid #e8e8e8;box-sizing:border-box;border-bottom:1px solid #e2e2e2"></div><div class="r" style="left:837px;top:370px;width:1px;height:18px;background:#dcdcdc"></div><div class="r" style="left:841px;top:376px;width:962px;height:8px;background:#bfbfbf;border-radius:4px"></div><div class="t" style="left:1342.3px;top:406px;font-size:13.85px;color:#262626;font-weight:400;">Page Size:</div><div class="r" style="left:1417.5px;top:395px;width:79.5px;height:32px;box-sizing:border-box;border:1px solid #d9d9d9;border-radius:5px;background:#fff"></div><div class="t" style="left:1426.8px;top:405px;font-size:14px;color:#262626;font-weight:400;">20</div><svg class="r" style="left:1473px;top:405px;" width="14" height="10" viewBox="0 0 14 10"><path d="M2.5 2.5 L7 7 L11.5 2.5" fill="none" stroke="#333" stroke-width="1.6"/></svg><div class="t" style="left:1529.75px;top:405px;font-size:14.4px;color:#262626;font-weight:400;">1 to 2 of 2</div><svg class="r" style="left:1635px;top:404px;" width="14" height="14" viewBox="0 0 14 14"><path d="M3 2.5 V11.5 M11 2.5 L6.5 7 L11 11.5" fill="none" stroke="#b4b4b4" stroke-width="1.3"/></svg><svg class="r" style="left:1681px;top:404px;" width="12" height="14" viewBox="0 0 12 14"><path d="M8 2.5 L3.5 7 L8 11.5" fill="none" stroke="#b4b4b4" stroke-width="1.3"/></svg><div class="t" style="left:1722.75px;top:406px;font-size:13.65px;color:#262626;font-weight:400;">Page 1 of 1</div><svg class="r" style="left:1822px;top:404px;" width="12" height="14" viewBox="0 0 12 14"><path d="M3.5 2.5 L8 7 L3.5 11.5" fill="none" stroke="#b4b4b4" stroke-width="1.3"/></svg><svg class="r" style="left:1865px;top:404px;" width="14" height="14" viewBox="0 0 14 14"><path d="M3 2.5 L7.5 7 L3 11.5 M11 2.5 V11.5" fill="none" stroke="#b4b4b4" stroke-width="1.3"/></svg><div class="r" style="left:770px;top:434px;width:1150px;height:1px;background:#e2e2e2"></div><div class="r" style="left:1714px;top:455px;width:114px;height:32px;box-sizing:border-box;border:1px solid #cfcfcf;border-radius:16px;background:#fff"></div><div class="t" style="left:1714.0px;width:114px;text-align:center;top:464px;font-size:14.1px;color:#262626;font-weight:400;">Save and Add</div><div class="r" style="left:1838px;top:455px;width:52px;height:32px;background:#0099ff;border-radius:16px"></div><div class="t" style="left:1838.0px;width:52px;text-align:center;top:465px;font-size:13px;color:#fff;font-weight:700;-webkit-text-stroke:0">Add</div><div class="r" style="left:66px;top:0px;width:1854px;height:54px;background:#fff;box-shadow:none"></div><div class="r" style="left:86px;top:11px;width:86px;height:32px;box-sizing:border-box;border:1px solid #d2e6fb;background:#eaf4fe;border-radius:16px"></div><svg class="r" style="left:97px;top:19px;" width="16" height="16" viewBox="0 0 16 16"><circle cx="8" cy="8" r="8" fill="#0a96f6"/><path d="M8 4.6 V11.4 M4.6 8 H11.4" stroke="#fff" stroke-width="1.7"/></svg><div class="t" style="left:118.8px;top:20px;font-size:14px;color:#5f6064;font-weight:400;letter-spacing:-0.17px">Create</div><div class="r" style="left:729px;top:11px;width:552px;height:32px;box-sizing:border-box;border:1px solid #d2e6fb;background:#eaf4fe;border-radius:16px"></div><svg class="r" style="left:736px;top:17px;" width="20" height="20" viewBox="0 0 20 20"><circle cx="9" cy="9" r="5.6" fill="none" stroke="#5f6368" stroke-width="1.6"/><path d="M13 13 L16.8 16.8" stroke="#5f6368" stroke-width="1.6" stroke-linecap="round"/></svg><div class="t" style="left:762px;top:20px;font-size:14px;color:#5f6064;font-weight:400;">Search</div><svg class="r" style="left:1255px;top:20px;" width="16" height="16" viewBox="0 0 16 16"><path d="M2 3.2 H14 M3.5 7.5 H12.5 M6.5 11.8 H9.5" stroke="#5f6368" stroke-width="1.6" stroke-linecap="round"/></svg><svg class="r" style="left:1768px;top:16px;" width="24" height="20" viewBox="0 0 24 20"><path d="M9.3 4.8 Q9.9 9.1 14.3 9.7 Q9.9 10.3 9.3 14.8 Q8.7 10.3 4.3 9.7 Q8.7 9.1 9.3 4.8Z" fill="none" stroke="#a652e8" stroke-width="1.05" stroke-linejoin="round"/><path d="M17.4 4.2 V8.8 M15.1 6.5 H19.7" stroke="#1e9cf5" stroke-width="1.05"/><path d="M16.3 13.1 V17.5 M14.1 15.3 H18.5" stroke="#5ec0fa" stroke-width="1.05"/></svg><svg class="r" style="left:1810px;top:24px;" width="28" height="18" viewBox="0 0 28 18"><path d="M9 5 L8 9.5 Q6.5 11.3 7.5 11.8 H20.5 Q21.5 11.3 20 9.5 L19 5" fill="none" stroke="#272d52" stroke-width="1.3"/><path d="M12.3 13.3 Q14 14.8 15.7 13.3" fill="none" stroke="#272d52" stroke-width="1.3"/></svg><div class="r" style="left:1809px;top:13px;width:35px;height:17px;background:#272d52;border-radius:9px"></div><div class="t" style="left:1809.5px;width:34px;text-align:center;top:16px;font-size:12px;color:#fff;font-weight:400;-webkit-text-stroke:0.3px #fff">99+</div><svg class="r" style="left:1852px;top:13px;" width="28" height="28" viewBox="0 0 28 28"><defs><clipPath id="av"><circle cx="14" cy="14" r="14"/></clipPath></defs>
<g clip-path="url(#av)"><rect width="28" height="28" fill="#5c605a"/>
<path d="M7.5 14 Q6.5 2 14 2 Q21.5 2 20.5 14 Q20 9 18.5 6.5 Q14 5.5 9.5 6.5 Q8 9 7.5 14Z" fill="#4b3a2e"/>
<ellipse cx="14" cy="11.5" rx="5" ry="6.8" fill="#caa792"/>
<path d="M11.5 8 Q14 6 17 7.5" fill="none" stroke="#5a4536" stroke-width="1.2"/>
<ellipse cx="14" cy="15.6" rx="1.6" ry="0.7" fill="#a86c66"/>
<rect x="11.8" y="17" width="4.4" height="4" fill="#b99a86"/>
<path d="M10 21 L14 20 L18.5 21 L20 28 L9 28Z" fill="#e6e6e3"/>
<path d="M2 28 Q3 22 10.5 20.5 L12.5 28Z M26 28 Q25 22 17.5 20.5 L15.5 28Z" fill="#151515"/>
</g></svg><svg class="r" style="left:1885px;top:21px;" width="16" height="12" viewBox="0 0 16 12"><path d="M2.5 3.5 L8 9 L13.5 3.5" fill="none" stroke="#6b6b6b" stroke-width="1.2"/></svg><div class="r" style="left:0px;top:0px;width:66px;height:982px;background:#2c2e4d"></div><div class="r" style="left:65px;top:0px;width:1px;height:982px;background:#24263f"></div><svg class="r" style="left:0px;top:20px;" width="66" height="32" viewBox="0 0 66 32">
<defs>
<linearGradient id="gr" x1="0" x2="1"><stop offset="0" stop-color="#ff1f10"/><stop offset="1" stop-color="#c80a00"/></linearGradient>
<linearGradient id="gb" x1="0" x2="1"><stop offset="0" stop-color="#19b4ff"/><stop offset="1" stop-color="#0a6fe8"/></linearGradient>
<linearGradient id="gg" x1="0" x2="1"><stop offset="0" stop-color="#7ad000"/><stop offset="1" stop-color="#2f8c00"/></linearGradient>
</defs>
<clipPath id="cr"><circle cx="16.5" cy="16" r="9.6"/></clipPath>
<clipPath id="cb"><circle cx="32.4" cy="16" r="9.8"/></clipPath>
<circle cx="16.5" cy="16" r="9.6" fill="url(#gr)"/>
<circle cx="48.1" cy="16" r="9.7" fill="url(#gg)"/>
<circle cx="32.4" cy="16" r="9.8" fill="url(#gb)"/>
<circle cx="32.4" cy="16" r="9.8" fill="#000" clip-path="url(#cr)"/>
<circle cx="48.1" cy="16" r="9.7" fill="#0b4a0b" clip-path="url(#cb)"/>
</svg><svg class="r" style="left:20px;top:73px;" width="26" height="26" viewBox="0 0 26 26"><g fill="none" stroke="#f2f2f6" stroke-width="1.45" stroke-linecap="round" stroke-linejoin="round"><path d="M2.5 13 L13 3.5 L23.5 13"/><path d="M5 11 V21.5 Q5 23 6.5 23 H19.5 Q21 23 21 21.5 V11"/><path d="M10.5 23 V17 H15.5 V23"/></g></svg><svg class="r" style="left:20px;top:120px;" width="26" height="26" viewBox="0 0 26 26"><g fill="none" stroke="#f2f2f6" stroke-width="1.45" stroke-linecap="round" stroke-linejoin="round"><path d="M13 3 V16"/><path d="M8.5 7.5 L13 3 L17.5 7.5"/><rect x="3.5" y="15.5" width="19" height="7" rx="2.5"/><circle cx="18" cy="19" r="0.6" fill="#fff"/></g></svg><svg class="r" style="left:20px;top:166px;" width="26" height="26" viewBox="0 0 26 26"><g fill="none" stroke="#f2f2f6" stroke-width="1.45" stroke-linecap="round" stroke-linejoin="round"><rect x="5" y="12" width="3.6" height="10" rx="1.8"/><rect x="11.2" y="5" width="3.6" height="17" rx="1.8"/><rect x="17.4" y="8" width="3.6" height="14" rx="1.8"/></g></svg><svg class="r" style="left:20px;top:214px;" width="26" height="26" viewBox="0 0 26 26"><g fill="none" stroke="#f2f2f6" stroke-width="1.45" stroke-linecap="round" stroke-linejoin="round"><path d="M3.5 6 Q3.5 4.5 5 4.5 H10 L12.5 7 H21 Q22.5 7 22.5 8.5 V20.5 Q22.5 22 21 22 H5 Q3.5 22 3.5 20.5 Z"/></g></svg><svg class="r" style="left:20px;top:260px;" width="26" height="27" viewBox="0 0 26 27"><g fill="none" stroke="#fff" stroke-width="1.6" stroke-linejoin="round">
<path d="M11 3.5 h4 l0.8 2.8 l2.3 1.3 l2.8 -0.7 l2 3.5 l-2 2.1 v2.6 l2 2.1 l-2 3.5 l-2.8 -0.7 l-2.3 1.3 l-0.8 2.8 h-4 l-0.8 -2.8 l-2.3 -1.3 l-2.8 0.7 l-2 -3.5 l2 -2.1 v-2.6 l-2 -2.1 l2 -3.5 l2.8 0.7 l2.3 -1.3 Z"/>
<circle cx="13" cy="13.5" r="2.6"/></g></svg><svg class="r" style="left:20px;top:307px;" width="27" height="27" viewBox="0 0 27 27"><g fill="none" stroke="#f2f2f6" stroke-width="1.45" stroke-linecap="round" stroke-linejoin="round"><circle cx="12" cy="12" r="8.2"/><path d="M18 18 L23.5 23.5"/></g></svg><svg class="r" style="left:20px;top:355px;" width="26" height="26" viewBox="0 0 26 26"><g fill="none" stroke="#f2f2f6" stroke-width="1.45" stroke-linecap="round" stroke-linejoin="round"><circle cx="13" cy="7.5" r="4.3"/><path d="M4 22.5 Q4 15.5 13 15.5 Q22 15.5 22 22.5 Z"/></g></svg><div class="r" style="left:10px;top:885px;width:46px;height:2px;background:#8a8c9a;opacity:.85"></div><svg class="r" style="left:20px;top:908px;" width="26" height="26" viewBox="0 0 26 26"><g fill="none" stroke="#f2f2f6" stroke-width="1.45" stroke-linecap="round" stroke-linejoin="round"><path d="M3.8 5 H8 V10.5 L13 7 V10.5 L18 7 L22.5 9.5 V21 Q22.5 22 21.5 22 H5 Q3.8 22 3.8 21 Z"/></g></svg><svg class="r" style="left:20px;top:945px;" width="26" height="26" viewBox="0 0 26 26"><circle cx="13" cy="13" r="9.6" fill="none" stroke="#fff" stroke-width="1.5"/><path d="M10 10.5 Q10 7.5 13 7.5 Q16 7.5 16 10.3 Q16 12 14.2 12.9 Q13 13.5 13 15.2" fill="none" stroke="#fff" stroke-width="1.6" stroke-linecap="round"/><circle cx="13" cy="18.3" r="1" fill="#fff"/></svg><svg class="r" style="left:0px;top:0px;" width="8" height="8" viewBox="0 0 8 8"><path d="M0 0 H6 Q0 2 0 6Z" fill="#000"/></svg><svg class="r" style="left:0px;top:974px;" width="8" height="8" viewBox="0 0 8 8"><path d="M0 8 H6 Q0 6 0 2Z" fill="#000"/></svg>
</body></html>
